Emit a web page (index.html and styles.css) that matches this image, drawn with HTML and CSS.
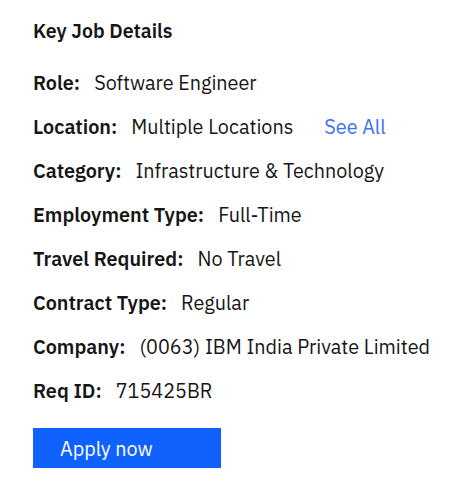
FILE: index.html
```html
<!DOCTYPE html>
<html>
<head>
<meta charset="utf-8">
<link rel="stylesheet" href="styles.css">
</head>
<body>
<section class="card">
  <h2 class="title">Key Job Details</h2>
  <ul class="details">
    <li class="row"><span class="label">Role:</span><span class="value">Software Engineer</span></li>
    <li class="row"><span class="label">Location:</span><span class="value">Multiple Locations</span><a class="link" href="#">See All</a></li>
    <li class="row"><span class="label">Category:</span><span class="value">Infrastructure &amp; Technology</span></li>
    <li class="row"><span class="label">Employment Type:</span><span class="value">Full-Time</span></li>
    <li class="row"><span class="label">Travel Required:</span><span class="value">No Travel</span></li>
    <li class="row"><span class="label">Contract Type:</span><span class="value">Regular</span></li>
    <li class="row"><span class="label">Company:</span><span class="value">(0063) IBM India Private Limited</span></li>
    <li class="row"><span class="label">Req ID:</span><span class="value">715425BR</span></li>
  </ul>
  <a class="apply" href="#">Apply now</a>
</section>
</body>
</html>
```

FILE: styles.css
```css
html, body {
  margin: 0;
  padding: 0;
  background: #ffffff;
}
body {
  font-family: "IBM Plex Sans", "Noto Sans", "Open Sans", sans-serif;
  color: #161616;
}
.card {
  padding: 19px 0 0 33px;
  display: flex;
  flex-direction: column;
  align-items: flex-start;
}
.title {
  margin: 0;
  font-size: 19.5px;
  font-weight: 600;
  line-height: 24px;
}
.details {
  list-style: none;
  margin: 28px 0 0 0;
  padding: 0;
  display: flex;
  flex-direction: column;
  gap: 20px;
}
.row {
  display: flex;
  align-items: baseline;
  font-size: 19.8px;
  line-height: 24px;
}
.label {
  font-weight: 600;
  margin-right: 14px;
}
.value {
  font-weight: 400;
}
.link {
  margin-left: 31px;
  color: #3b6ff6;
  text-decoration: none;
}
.apply {
  margin-top: 25px;
  width: 188px;
  height: 40px;
  box-sizing: border-box;
  padding-left: 27px;
  display: flex;
  align-items: center;
  background: #0f62fe;
  color: #ffffff;
  font-size: 19.8px;
  text-decoration: none;
}
```
